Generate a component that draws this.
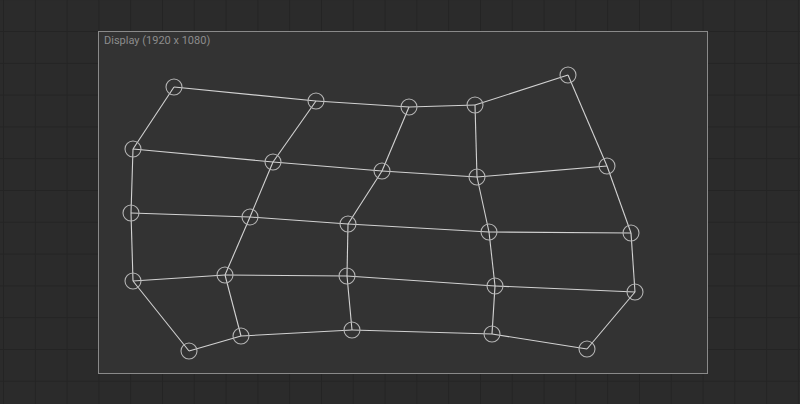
import React from 'react';

type Pt = [number, number];

// mesh control points, page coords (rows top→bottom, cols left→right)
const mesh: Pt[][] = [
    [[174, 87], [316, 101], [409, 107], [475, 105], [568, 75]],
    [[133, 149], [273, 162], [382, 171], [477, 177], [607, 166]],
    [[131, 213], [250, 217], [348, 224], [489, 232], [631, 233]],
    [[133, 281], [225, 275], [347, 276], [495, 286], [635, 292]],
    [[189, 351], [241, 336], [352, 330], [492, 334], [587, 349]],
];

export default function App() {
    const lines: [Pt, Pt][] = [];
    mesh.forEach((row, r) => {
        row.forEach((p, c) => {
            if (c < row.length - 1) lines.push([p, row[c + 1]]);
            if (r < mesh.length - 1) lines.push([p, mesh[r + 1][c]]);
        });
    });

    return (
        <div className="w-[800px] h-[404px] overflow-hidden bg-[#2b2b2b] bg-[linear-gradient(to_right,#242424_1px,transparent_1px),linear-gradient(to_bottom,#242424_1px,transparent_1px)] bg-[length:31.8px_31.8px] bg-[position:3px_31px] pt-[31px] pl-[98px]">
            <div className="relative w-[610px] h-[343px] bg-[#333333] border border-[#8a8a8a]">
                <div className="px-[5px] pt-[2px] text-[11px] leading-[14px] text-[#8c8c8c] font-['Roboto',sans-serif]">
                    Display (1920 x 1080)
                </div>
                {/* mesh overlay */}
                <svg className="absolute -left-px -top-px" width={610} height={343} viewBox="98 31 610 343">
                    {lines.map(([a, b], i) => (
                        <line key={i} x1={a[0]} y1={a[1]} x2={b[0]} y2={b[1]} stroke="#d2d2d2" strokeWidth={1.1} />
                    ))}
                    {mesh.flat().map((p, i) => (
                        <circle key={i} cx={p[0]} cy={p[1]} r={8} fill="none" stroke="#b4b4b4" strokeWidth={1.1} />
                    ))}
                </svg>
            </div>
        </div>
    );
}
